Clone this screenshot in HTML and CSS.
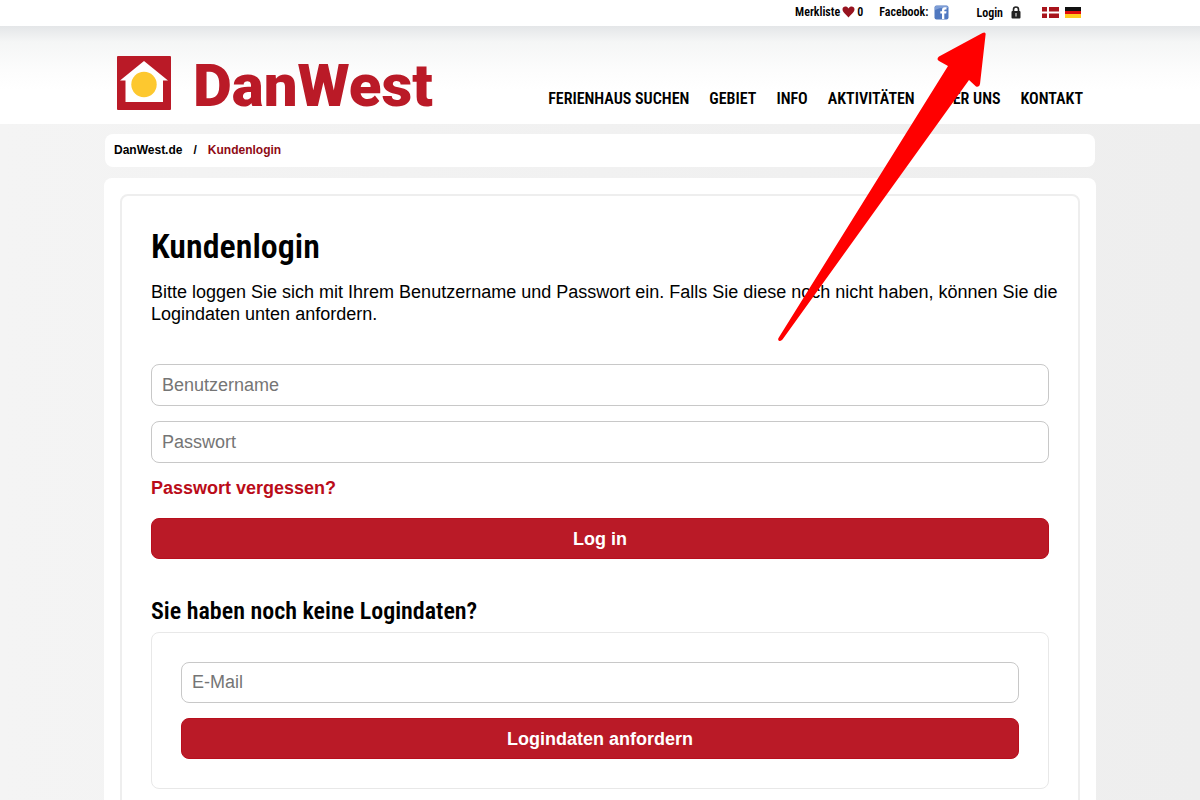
FILE: index.html
```html
<!DOCTYPE html>
<html lang="de">
<head>
<meta charset="utf-8">
<meta name="viewport" content="width=device-width, initial-scale=1">
<title>Kundenlogin</title>
<link rel="stylesheet" href="styles.css">
</head>
<body>
<div class="topbar">
  <div class="topbar-inner wrap">
    <a class="top-link" href="#">Merkliste
      <svg class="heart" width="13" height="12" viewBox="0 0 13 12"><path d="M6.500 11.500C4.500 9 .500 6.500.500 3.300.500.300 4.700-.500 6.500 2.400 8.300-.500 12.500.300 12.500 3.300 12.500 6.500 8.500 9 6.500 11.500Z" fill="#97131f"/></svg>
      0</a>
    <a class="top-link facebook" href="#">Facebook:
      <svg width="15" height="15" viewBox="0 0 15 15"><rect x=".5" y=".5" width="14" height="14" rx="2" fill="#5078c0"/><path d="M1 5V2q0-1 1-1h11q1 0 1 1v1Q7 2 1 5Z" fill="#7d9dd6"/><path d="M8 14V8.500H6.300V6.300H8V5q0-2.700 2.700-2.700h1.800v2.200h-1.200q-1 0-1 1v.8h2.200l-.3 2.200h-1.900V14Z" fill="#fff"/></svg></a>
    <a class="top-link login" href="#">Login
      <svg width="10" height="13" viewBox="0 0 10 13"><path d="M2.500 6V3.500a2.500 2.500 0 0 1 5 0V6" fill="none" stroke="#222" stroke-width="1.600"/><rect x=".5" y="5" width="9" height="7.500" rx="1" fill="#222"/><path d="M5 7v3.500" stroke="#aaa" stroke-width="1.600"/></svg></a>
    <div class="flags">
      <a href="#" aria-label="Dansk"><svg width="17" height="11" viewBox="0 0 17 11"><path d="M0 0h17v11H0Z" fill="#a8141c"/><path d="M6 0v11M0 5.500h17" stroke="#fff" stroke-width="2"/></svg></a>
      <a href="#" aria-label="Deutsch"><svg width="16" height="11" viewBox="0 0 16 11"><path d="M0 0h16v4H0Z" fill="#111"/><path d="M0 4h16v3H0Z" fill="#e00b0b"/><path d="M0 7h16v4H0Z" fill="#ffcb1f"/></svg></a>
    </div>
  </div>
</div>
<header class="header">
  <div class="header-inner wrap">
    <a class="logo" href="#">
      <svg width="54" height="54" viewBox="0 0 54 54"><rect width="54" height="54" rx="1" fill="#ba1a27"/><path d="M27 5 51 24.500H46V46H8.500V24.500H3Z" fill="#fff"/><circle cx="27" cy="28.500" r="12.700" fill="#fdc82f"/></svg>
      <span class="logo-text">DanWest</span>
    </a>
    <nav class="nav">
      <a href="#">FERIENHAUS SUCHEN</a>
      <a href="#">GEBIET</a>
      <a href="#">INFO</a>
      <a href="#">AKTIVITÄTEN</a>
      <a href="#">ÜBER UNS</a>
      <a href="#">KONTAKT</a>
    </nav>
    <svg class="arrow" width="212" height="310" viewBox="0 0 212 310"><path d="M209.500 4.200Q210.300.5 206.500 2L163 25.500Q160 28 163 30L172 35 2.500 307Q1.500 309 3.200 310 5 310 6.500 308.500L193 49 200 55.500Q203.500 56.500 204 53Z" fill="#f00"/></svg>
  </div>
</header>
<div class="page">
  <nav class="breadcrumb" aria-label="Breadcrumb">
    <a href="#">DanWest.de</a><span>/</span><a class="current" href="#">Kundenlogin</a>
  </nav>
  <main class="content">
    <section class="panel">
      <h1>Kundenlogin</h1>
      <p class="intro">Bitte loggen Sie sich mit Ihrem Benutzername und Passwort ein. Falls Sie diese noch nicht haben, können Sie die Logindaten unten anfordern.</p>
      <form class="form">
        <input class="field" type="text" placeholder="Benutzername" aria-label="Benutzername">
        <input class="field" type="password" placeholder="Passwort" aria-label="Passwort">
        <a class="forgot" href="#">Passwort vergessen?</a>
        <button class="button" type="submit">Log in</button>
      </form>
      <h2>Sie haben noch keine Logindaten?</h2>
      <form class="form request">
        <input class="field" type="email" placeholder="E-Mail" aria-label="E-Mail">
        <button class="button" type="submit">Logindaten anfordern</button>
      </form>
    </section>
  </main>
</div>
</body>
</html>
```
FILE: styles.css
```css
* { box-sizing: border-box; }
body {
  margin: 0;
  font-family: "Liberation Sans", Arial, sans-serif;
  color: #000;
  background: linear-gradient(to right, #f4f4f4, #eee);
}
a { color: inherit; text-decoration: none; }
svg { display: block; }
.wrap { max-width: 992px; margin: 0 auto; }
.topbar { background: #fff; }
.topbar-inner {
  display: flex;
  justify-content: flex-end;
  align-items: center;
  height: 26px;
  padding: 0 15px 2px 0;
  font: 600 12px/16px "Roboto Condensed", Roboto, sans-serif;
}
.top-link { display: flex; align-items: center; gap: 2px; }
.facebook { gap: 6px; margin-left: 16px; }
.login { gap: 8px; margin-left: 27px; padding-top: 1px; }
.flags { display: flex; gap: 6px; margin-left: 21px; padding-top: 1px; }
.header { background: linear-gradient(#e4e6e8, #f5f6f6 16px, #fcfcfc 44px, #fff 64px); }
.header-inner {
  position: relative;
  display: flex;
  justify-content: space-between;
  padding: 30px 13px 14px 13px;
}
.logo { display: flex; align-items: center; gap: 22px; height: 54px; }
.logo-text { padding-top: 5px; font: 900 60px/54px Roboto, "Noto Sans", sans-serif; color: #ba1a27; }
.nav {
  display: flex;
  align-items: flex-end;
  gap: 20px;
  font: 600 16px/22px "Roboto Condensed", Roboto, sans-serif;
  white-space: nowrap;
}
.arrow { position: absolute; left: 672px; top: 5px; pointer-events: none; z-index: 1; }
.page { max-width: 992px; margin: 0 auto; padding-top: 10px; }
.breadcrumb {
  display: flex;
  gap: 11px;
  margin: 0 1px 11px;
  padding: 8px 9px 9px;
  border-radius: 8px;
  background: #fff;
  font-size: 12px;
  line-height: 16px;
  font-weight: bold;
}
.current { color: #8f0a14; }
.content { padding: 16px; border-radius: 8px; background: #fff; }
.panel { padding: 29px; border: 2px solid #eee; border-radius: 8px; }
h1, h2 { margin: 0; font-family: "Roboto Condensed", Roboto, sans-serif; font-weight: 600; }
h1 { font-size: 34px; line-height: 42px; }
h2 { margin: 36px 0 5px; font-size: 24px; line-height: 32px; }
.intro { margin: 14px -12px 39px 0; font-size: 18px; line-height: 22px; }
.form { display: flex; flex-direction: column; align-items: stretch; gap: 15px; }
.field {
  width: 100%;
  height: 42px;
  padding: 0 10px;
  border: 1px solid #c8c8c8;
  border-radius: 8px;
  background: #fff;
  font: 18px/22px "Liberation Sans", Arial, sans-serif;
}
.field::placeholder { color: #757575; opacity: 1; }
.forgot { align-self: flex-start; margin-bottom: 4px; font-size: 18px; line-height: 21px; font-weight: bold; color: #ba0c19; }
.button {
  height: 41px;
  border: 1px solid #b80f1d;
  border-radius: 8px;
  background: #ba1a27;
  color: #fff;
  font: bold 18px/22px "Liberation Sans", Arial, sans-serif;
}
.request { padding: 29px; border: 1px solid #e8e8e8; border-radius: 8px; }
.request .field { height: 41px; }
```
